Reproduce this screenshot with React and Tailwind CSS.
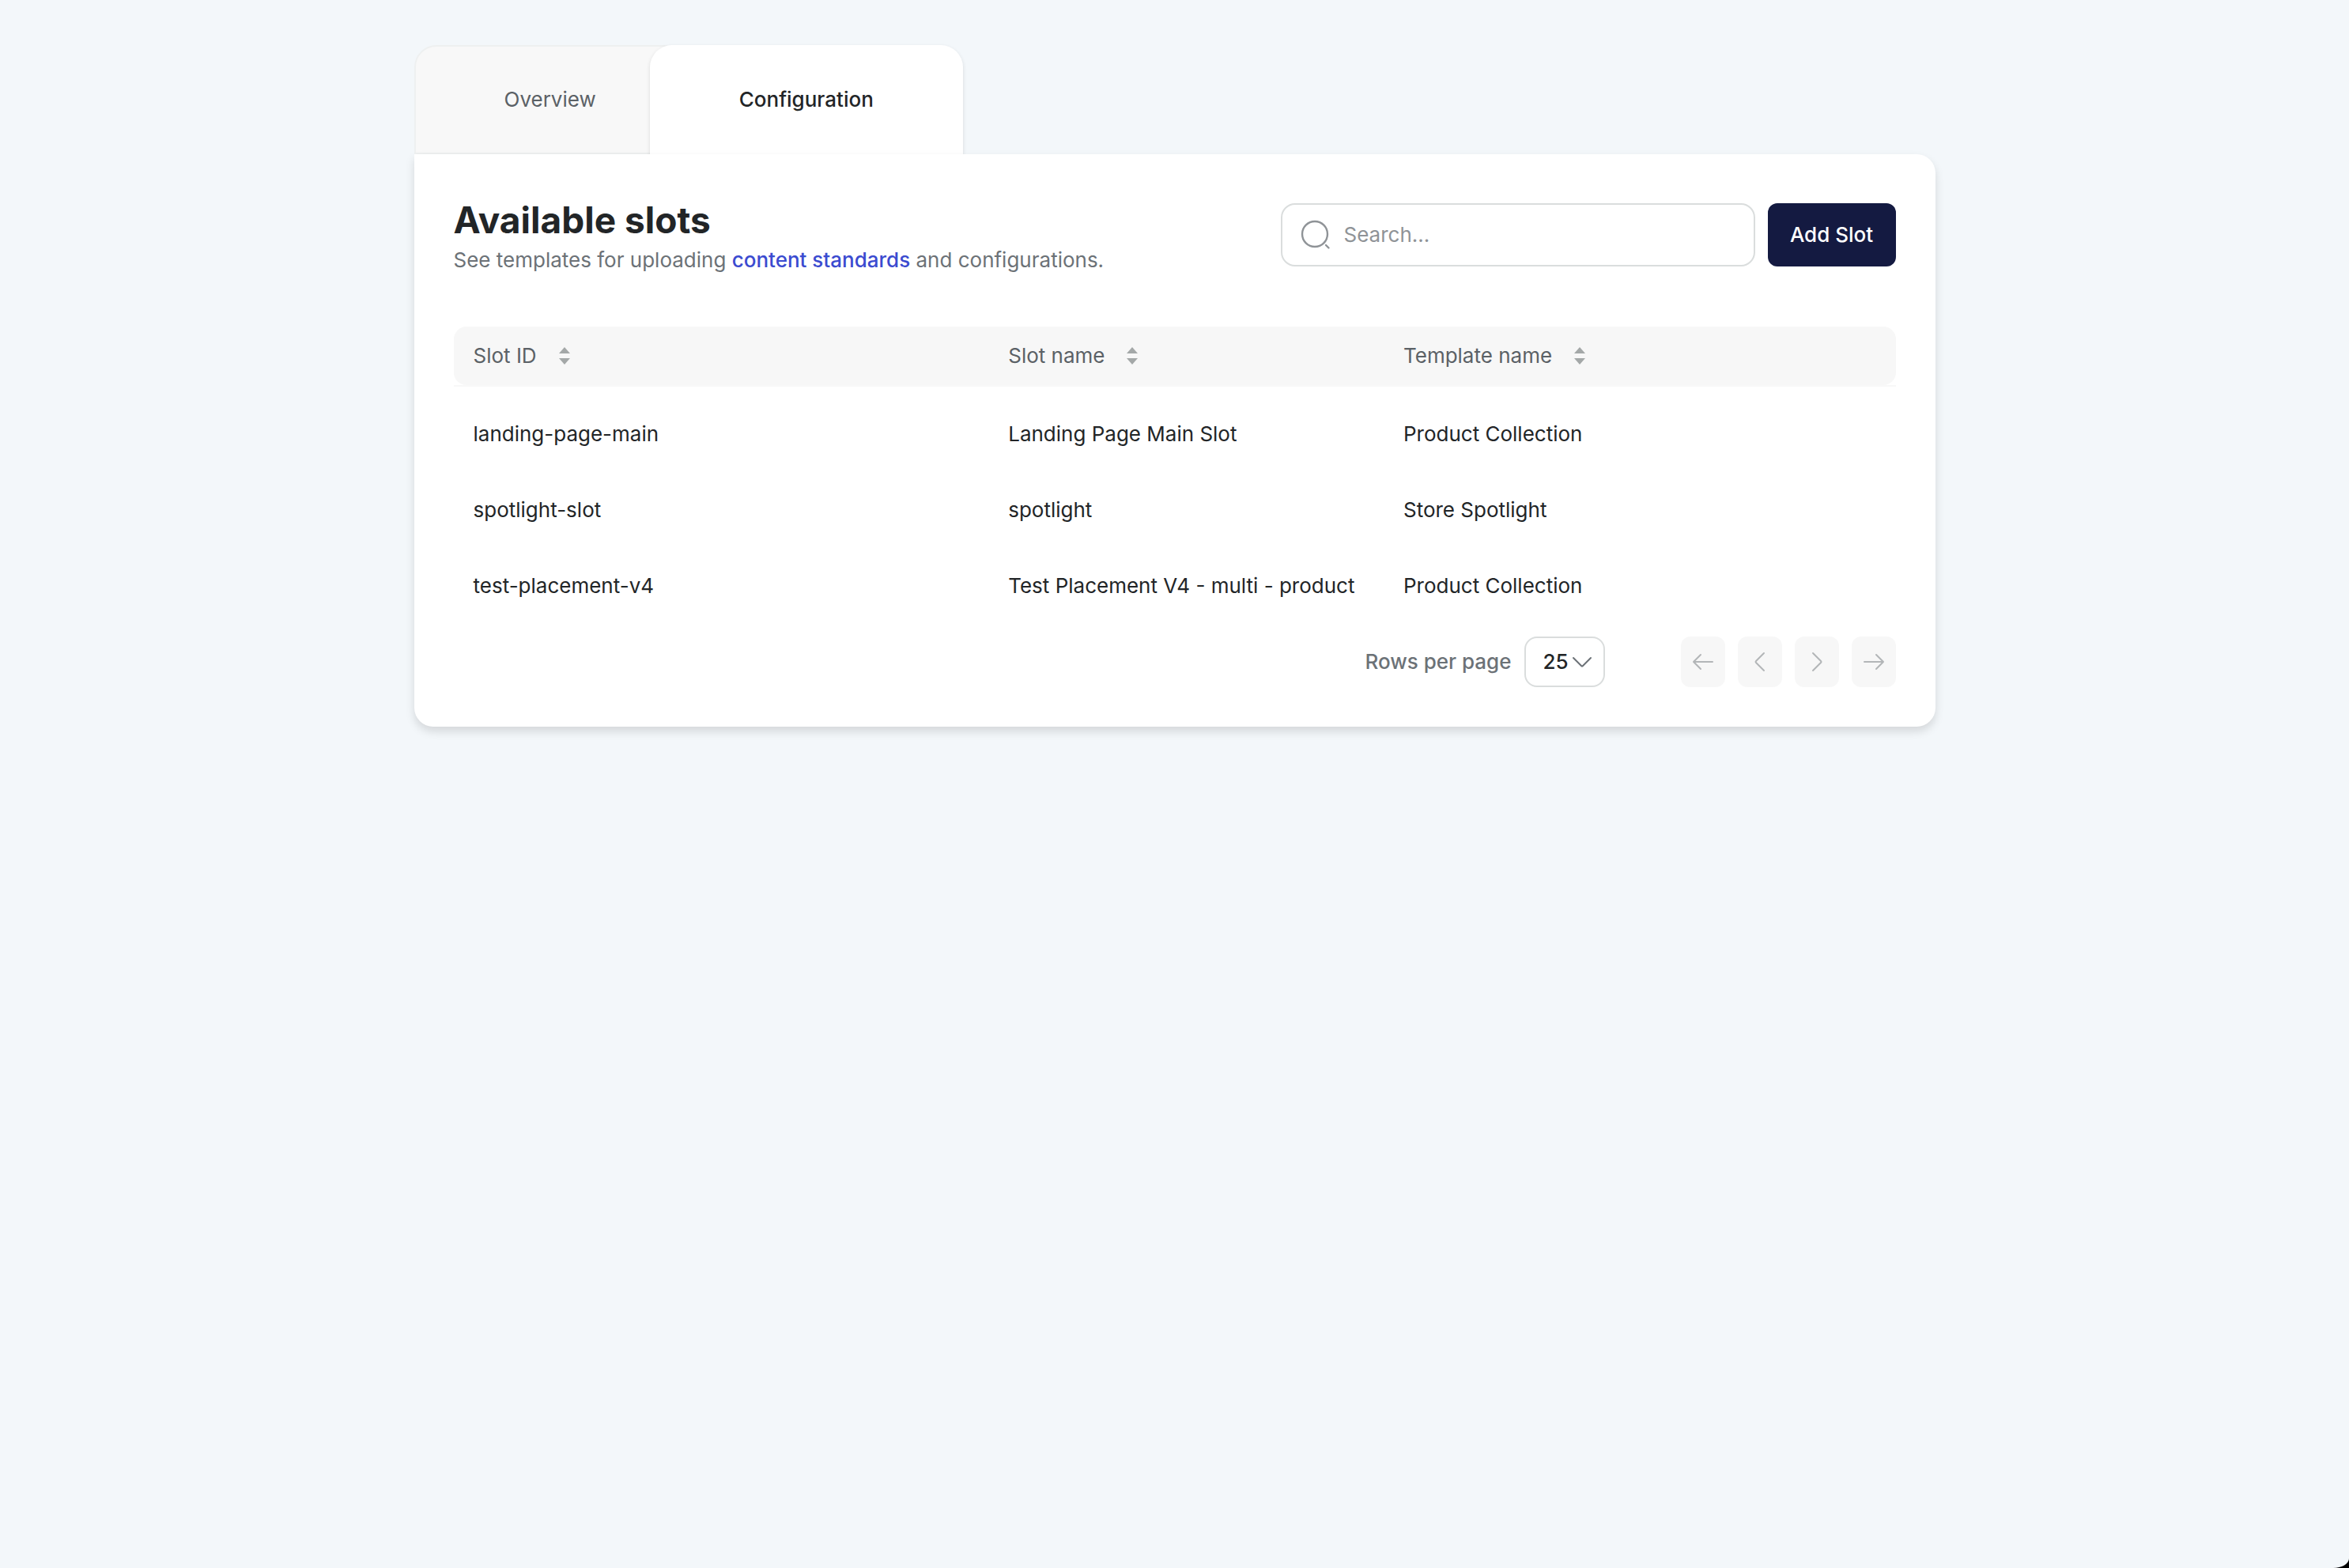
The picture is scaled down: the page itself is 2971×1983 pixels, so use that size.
const columns = ["Slot ID", "Slot name", "Template name"];

const rows = [
  ["landing-page-main", "Landing Page Main Slot", "Product Collection"],
  ["spotlight-slot", "spotlight", "Store Spotlight"],
  ["test-placement-v4", "Test Placement V4 - multi - product", "Product Collection"],
];

const pagerButtons = [
  { label: "First page", d: "M26 13H2M11 4L2 13l9 9" },
  { label: "Previous page", d: "M19 2L9 12q-1 1 0 2l10 10" },
  { label: "Next page", d: "M9 2l10 10q1 1 0 2L9 24" },
  { label: "Last page", d: "M2 13h24M17 4l9 9-9 9" },
];

function SortIcon() {
  return (
    <svg className="h-[22px] w-[14px]" viewBox="0 0 14 22" fill="#a4a8a8" aria-hidden="true">
      <path d="M7 0l7 8H0z" />
      <path d="M7 22l7-8H0z" />
    </svg>
  );
}

function SearchIcon() {
  return (
    <svg
      className="h-10 w-10 shrink-0"
      viewBox="0 0 40 40"
      fill="none"
      stroke="#8f9397"
      strokeWidth="2.4"
      strokeLinecap="round"
      aria-hidden="true"
    >
      <circle cx="19" cy="19" r="16" />
      <path d="M33 33l3.500 3.500" />
    </svg>
  );
}

function Tabs() {
  return (
    <div role="tablist" className="flex h-[138px] items-stretch">
      <button
        role="tab"
        aria-selected="false"
        className="rounded-t-[28px] border-2 border-[#eef0f0] bg-[#f8f8f8] px-[112px] text-[#5b6166]"
      >
        Overview
      </button>
      <button
        role="tab"
        aria-selected="true"
        className="-ml-[46px] rounded-t-[28px] bg-white px-[113px] font-medium text-[#222527] shadow-[0_2px_5px_rgba(0,0,0,0.12)]"
      >
        Configuration
      </button>
    </div>
  );
}

function CardHeader() {
  return (
    <div className="flex items-start justify-between gap-8">
      <div>
        <h1 className="text-[46px] leading-[42px] font-bold text-[#222527]">Available slots</h1>
        <p className="mt-3 leading-9 text-[#6c7277]">
          See templates for uploading{" "}
          <a href="#standards" className="font-medium text-[#3b4bd0]">
            content standards
          </a>{" "}
          and configurations.
        </p>
      </div>
      <div className="flex gap-4">
        <label className="flex h-20 w-[600px] items-center gap-4 rounded-[18px] border-2 border-[#dadddd] bg-white px-[22px]">
          <SearchIcon />
          <input
            type="search"
            aria-label="Search slots"
            placeholder="Search..."
            className="min-w-0 flex-1 bg-transparent outline-none placeholder:text-[#8f9397]"
          />
        </label>
        <button className="h-20 w-[162px] rounded-xl bg-[#141a41] font-medium whitespace-nowrap text-white">
          Add Slot
        </button>
      </div>
    </div>
  );
}

function SlotTable() {
  return (
    <table className="mt-[66px] w-full table-fixed border-separate border-spacing-0 text-left">
      <colgroup>
        <col className="w-[37.100%]" />
        <col className="w-[27.400%]" />
        <col />
      </colgroup>
      <thead>
        <tr className="h-[74px] shadow-[0_2px_0_#f8f8f8]">
          {columns.map((name) => (
            <th
              key={name}
              scope="col"
              className="bg-[#f7f7f7] px-[25px] font-normal text-[#5b6166] first:rounded-l-2xl last:rounded-r-2xl"
            >
              <button className="flex items-center gap-7">
                {name}
                <SortIcon />
              </button>
            </th>
          ))}
        </tr>
      </thead>
      <tbody className="before:block before:h-[14px] before:content-['']">
        {rows.map((row) => (
          <tr key={row[0]} className="h-24 text-[#222527]">
            {row.map((cell, i) => (
              <td key={i} className="px-[25px] whitespace-nowrap">
                {cell}
              </td>
            ))}
          </tr>
        ))}
      </tbody>
    </table>
  );
}

function Pagination() {
  return (
    <div className="mt-4 flex items-center justify-end">
      <label htmlFor="page-size" className="mr-4 font-medium text-[#6c7277]">
        Rows per page
      </label>
      <div className="relative mr-24">
        <select
          id="page-size"
          defaultValue="25"
          className="block h-16 w-[102px] appearance-none rounded-2xl border-2 border-[#dadddd] bg-white pl-[22px] font-medium text-[#222527]"
        >
          <option>25</option>
          <option>50</option>
          <option>100</option>
        </select>
        <svg
          className="pointer-events-none absolute top-6 right-4 h-4 w-[26px]"
          viewBox="0 0 26 16"
          fill="none"
          stroke="#6c7277"
          strokeWidth="2"
          strokeLinecap="round"
          strokeLinejoin="round"
          aria-hidden="true"
        >
          <path d="M2 3l10 10q1 1 2 0L24 3" />
        </svg>
      </div>
      <div className="flex gap-4">
        {pagerButtons.map(({ label, d }) => (
          <button
            key={label}
            disabled
            aria-label={label}
            className="flex h-16 w-14 items-center justify-center rounded-xl bg-[#f7f7f7]"
          >
            <svg
              className="h-[26px] w-7"
              viewBox="0 0 28 26"
              fill="none"
              stroke="#b3b6b8"
              strokeWidth="2"
              strokeLinecap="round"
              strokeLinejoin="round"
              aria-hidden="true"
            >
              <path d={d} />
            </svg>
          </button>
        ))}
      </div>
    </div>
  );
}

export default function App() {
  return (
    <div className="bg-black">
      <div className="min-h-screen bg-[#f3f7fa] px-8 pt-[57px] font-['Inter',sans-serif] text-[26px] leading-9 [border-bottom-right-radius:20px_12px]">
        <main className="mx-auto max-w-[1924px]">
          <Tabs />
          <section className="relative rounded-3xl rounded-tl-none bg-white px-[50px] pt-[62px] pb-[50px] shadow-[0_6px_12px_rgba(0,0,0,0.13)]">
            <CardHeader />
            <SlotTable />
            <Pagination />
          </section>
        </main>
      </div>
    </div>
  );
}
